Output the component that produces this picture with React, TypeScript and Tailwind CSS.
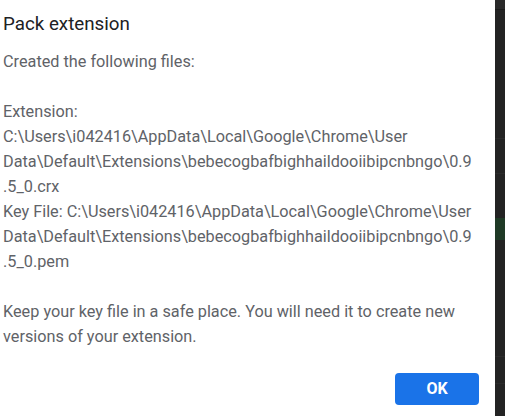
export default function App() {
  const lines = [
    "Created the following files:",
    "",
    "Extension:",
    "C:\\Users\\i042416\\AppData\\Local\\Google\\Chrome\\User",
    "Data\\Default\\Extensions\\bebecogbafbighhaildooiibipcnbngo\\0.9",
    ".5_0.crx",
    "Key File: C:\\Users\\i042416\\AppData\\Local\\Google\\Chrome\\User",
    "Data\\Default\\Extensions\\bebecogbafbighhaildooiibipcnbngo\\0.9",
    ".5_0.pem",
    "",
    "Keep your key file in a safe place. You will need it to create new",
    "versions of your extension.",
  ];

  return (
    <div className="flex w-[505px] h-[416px] overflow-hidden font-['Roboto',sans-serif]">
      <div className="w-[495px] bg-white flex flex-col pl-[3px] pr-4">
        <h1 className="text-[18.75px] leading-6 text-[#202124] pt-[12px]">Pack extension</h1>
        <div className="mt-[13px] text-[16.25px] leading-[25px] text-[#5f6368] whitespace-pre">
          {lines.map((line, i) => (
            <div key={i} className="h-[25px]">
              {line}
            </div>
          ))}
        </div>
        <div className="flex justify-end mt-auto mb-[11px]">
          <button className="w-[84px] h-[32px] rounded-[4px] bg-[#1a73e8] text-white text-[16px] font-bold">
            OK
          </button>
        </div>
      </div>
      <div className="flex-1 bg-[#232323] flex flex-col">
        <div className="h-[10px] bg-[#2a2a2a] border-b border-[#1c1c1c]" />
        <div className="mt-[128px] h-[36px] border-y border-[#2b2b2b]" />
        <div className="mt-[44px] h-[22px] bg-[#1f3a26]" />
        <div className="mt-[116px] h-[28px] border-y border-[#2b2b2b]" />
      </div>
    </div>
  );
}
